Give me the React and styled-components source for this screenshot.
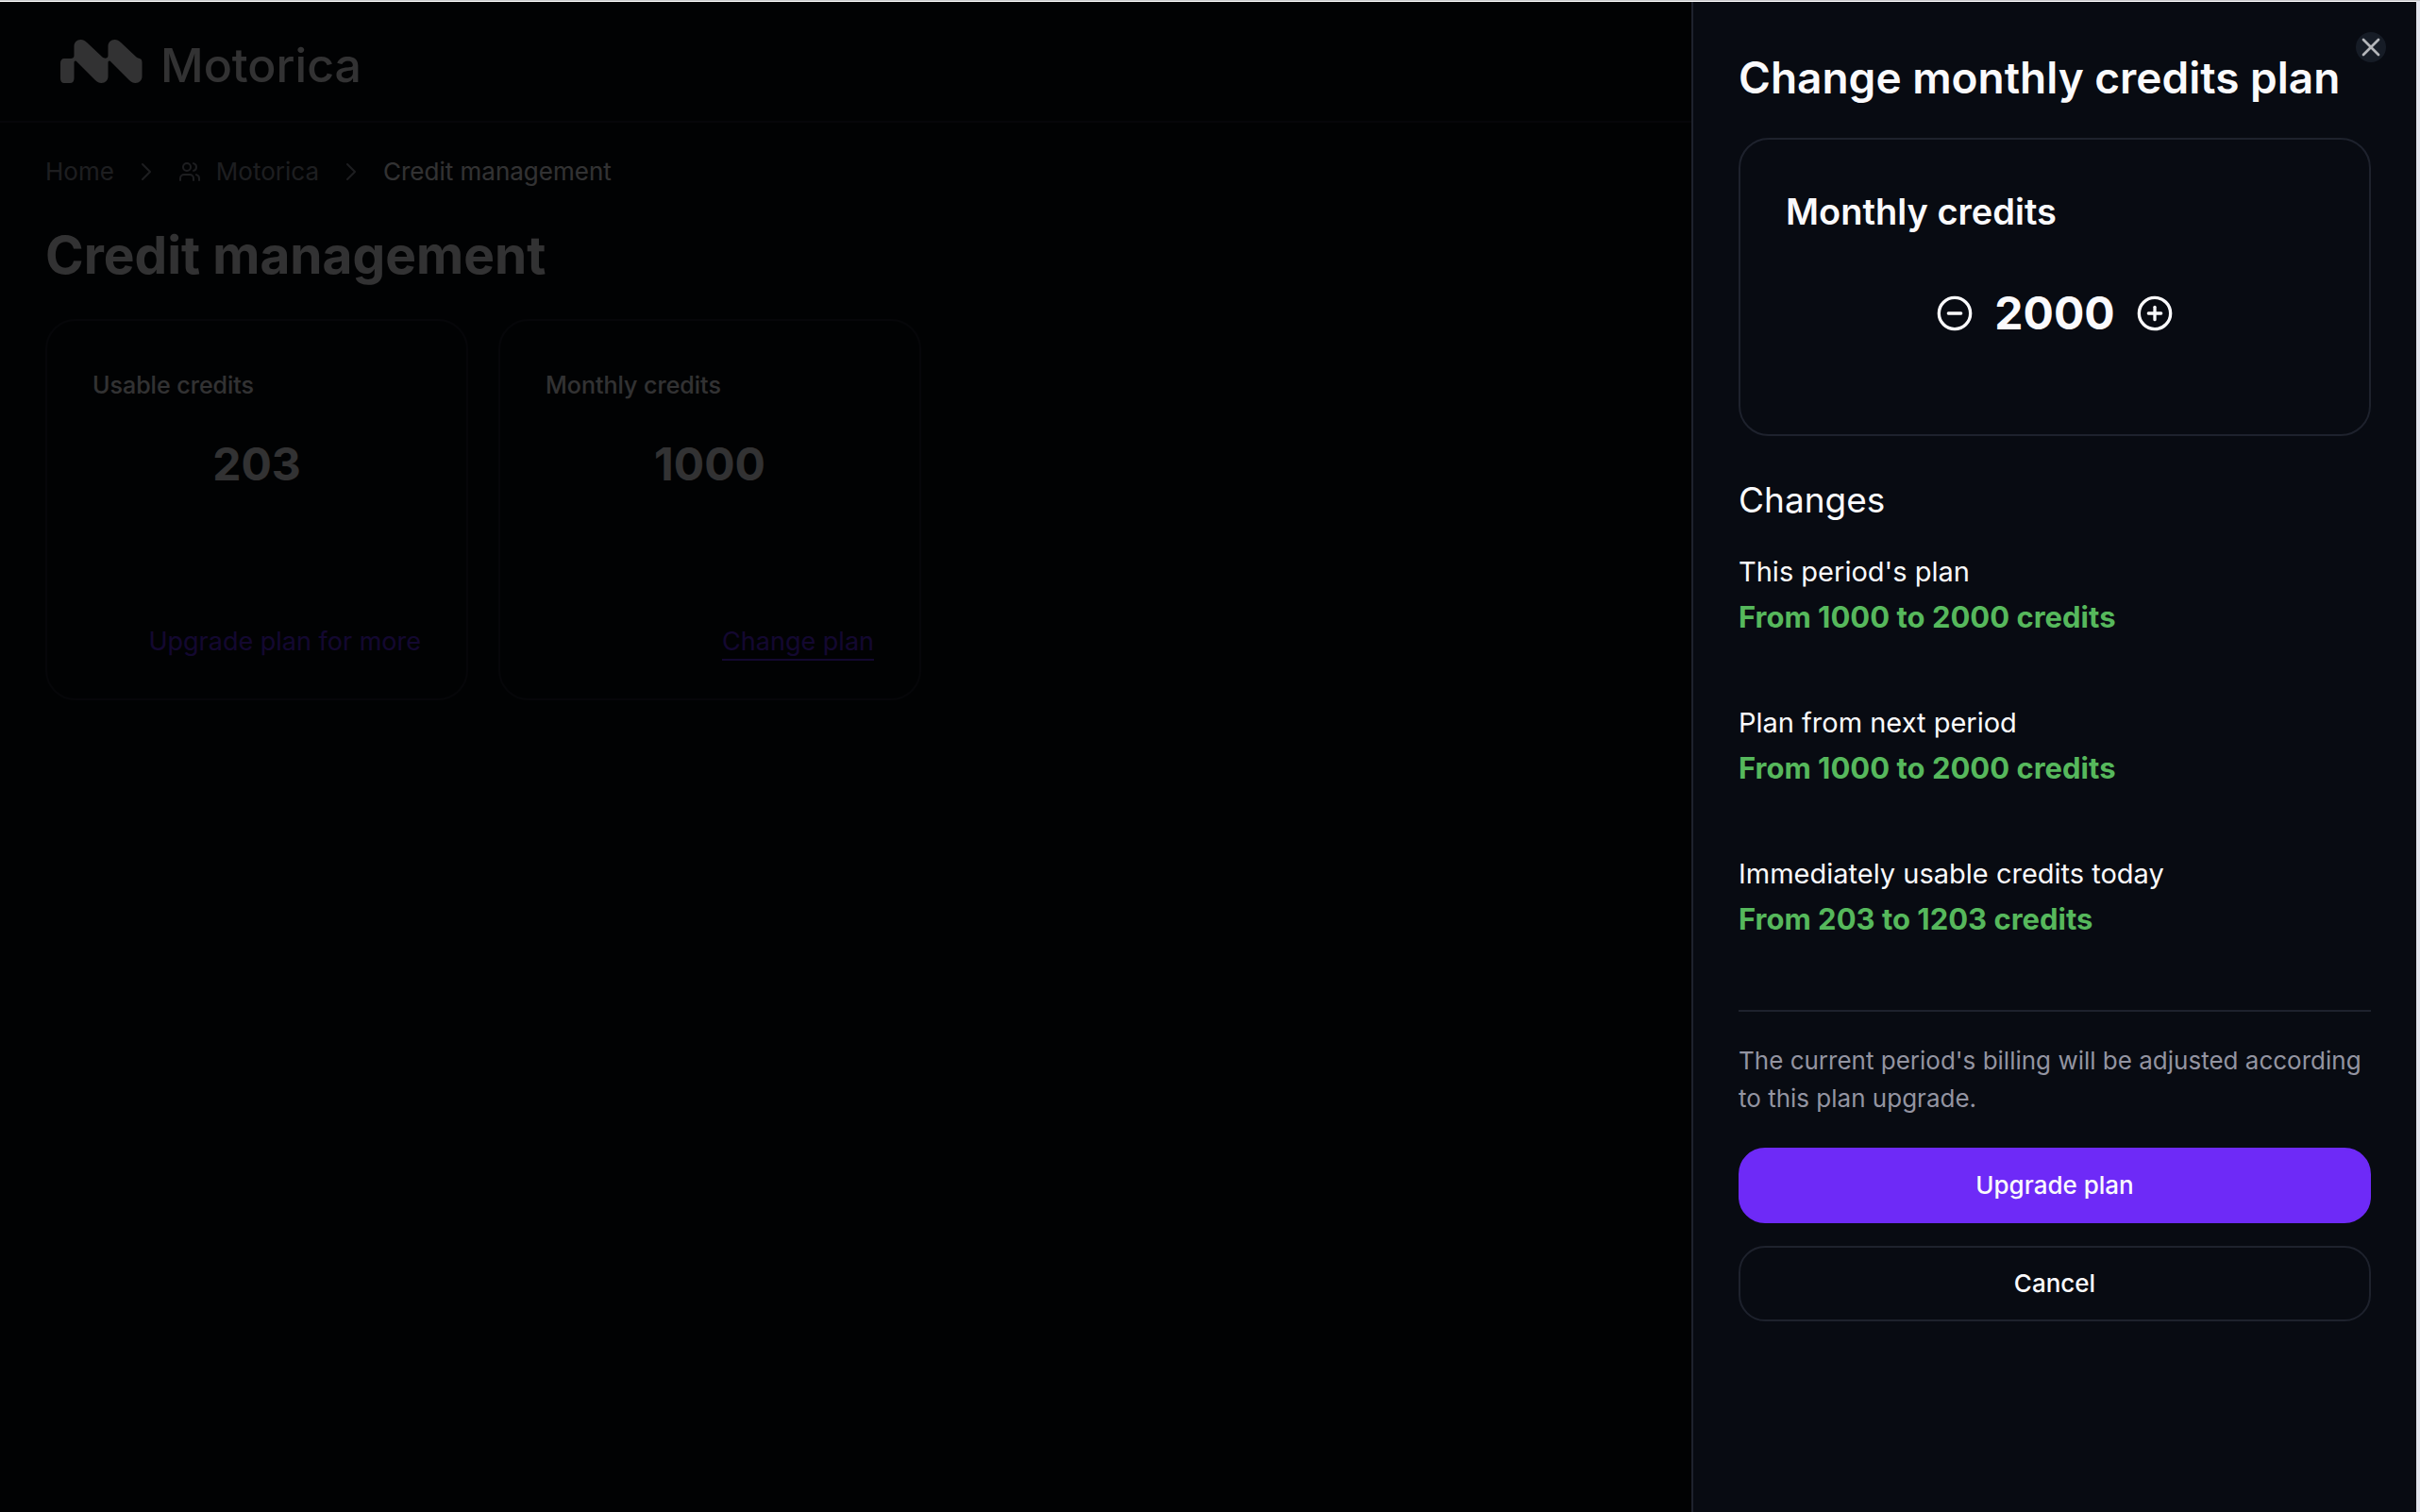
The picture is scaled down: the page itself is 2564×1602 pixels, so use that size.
import React, { useState } from 'react';
import styled, { createGlobalStyle } from 'styled-components';
import { ChevronRight, CircleMinus, CirclePlus, Users, X } from 'lucide-react';

const color = {
  page: '#080b12',
  line: '#1e222d',
  text: '#fafafc',
  muted: '#9394a1',
  purple: '#6e2af7',
  link: '#6228f0',
  green: '#56b85c',
};

const GlobalStyle = createGlobalStyle`
  *, *::before, *::after { box-sizing: border-box; }
  body {
    margin: 0;
    background: #e3e5ed;
    color: ${color.text};
    font-family: Inter, "Liberation Sans", sans-serif;
    font-size: 26px;
    line-height: 40px;
  }
  h1, h2, h3, p, ol, dl, dd { margin: 0; padding: 0; }
  button { font: inherit; color: inherit; cursor: pointer; }
`;

const Frame = styled.div`
  min-height: 100vh;
  display: flex;
  border-top: 1px solid #c6c7ca;
  padding-right: 4px;
`;

const Screen = styled.div`
  position: relative;
  flex: 1;
  border-top: 1px solid #ffffff;
  background: ${color.page};
`;

const Header = styled.header`
  display: flex;
  align-items: center;
  height: 128px;
  padding: 0 64px;
  border-bottom: 2px solid ${color.line};
`;

const Brand = styled.a`
  display: flex;
  align-items: flex-end;
  gap: 16px;
  color: inherit;
  text-decoration: none;
  font-size: 50px;
  font-weight: 500;
  line-height: 38px;
  svg { display: block; }
`;

const Main = styled.main`
  display: flex;
  flex-direction: column;
  gap: 32px;
  padding: 32px 48px;
`;

const Crumbs = styled.ol`
  display: flex;
  align-items: center;
  gap: 18px;
  list-style: none;
  color: ${color.muted};
`;

const Crumb = styled.li`
  display: flex;
  align-items: center;
  color: ${(p) => (p.$current ? color.text : 'inherit')};
`;

const CrumbLink = styled.a`
  display: flex;
  align-items: center;
  gap: 16px;
  color: inherit;
  text-decoration: none;
`;

const PageTitle = styled.h1`
  font-size: 55px;
  font-weight: 700;
  line-height: 72px;
`;

const Cards = styled.div`
  display: flex;
  flex-wrap: wrap;
  gap: 32px;
`;

const Card = styled.section`
  display: flex;
  flex-direction: column;
  width: 448px;
  min-height: 404px;
  padding: 48px 48px 40px;
  border: 2px solid ${color.line};
  border-radius: 32px;
`;

const CardLabel = styled.h2`
  font-size: 25px;
  font-weight: 500;
  line-height: 40px;
`;

const Amount = styled.output`
  font-size: 48px;
  font-weight: 700;
  line-height: 64px;
`;

const CardAmount = styled(Amount)`
  margin-top: 32px;
  text-align: center;
`;

const CardLink = styled.a`
  align-self: flex-end;
  margin-top: auto;
  border-bottom: 2px solid ${(p) => (p.$active ? 'currentColor' : 'transparent')};
  color: ${color.link};
  font-size: 27px;
  line-height: 36px;
  text-decoration: none;
  white-space: nowrap;
`;

const Scrim = styled.div`
  position: absolute;
  inset: 0;
  background: rgba(0, 0, 0, 0.8);
`;

const Drawer = styled.aside`
  position: absolute;
  top: 0;
  right: 0;
  bottom: 0;
  width: 768px;
  max-width: 100%;
  overflow-y: auto;
  padding: 48px;
  border-left: 2px solid ${color.line};
  background: ${color.page};
`;

const CloseButton = styled.button`
  position: absolute;
  top: 32px;
  right: 32px;
  display: flex;
  padding: 0;
  border: 0;
  border-radius: 50%;
  background: #161c26;
  color: #b4b6ba;
`;

const DrawerTitle = styled.h2`
  font-size: 46px;
  font-weight: 600;
  line-height: 64px;
`;

const PlanCard = styled.section`
  margin-top: 32px;
  padding: 48px 48px 96px;
  border: 2px solid ${color.line};
  border-radius: 32px;
`;

const PlanLabel = styled.h3`
  font-size: 38px;
  font-weight: 600;
  line-height: 56px;
`;

const Stepper = styled.div`
  display: flex;
  align-items: center;
  justify-content: center;
  gap: 22px;
  margin-top: 48px;
`;

const StepButton = styled.button`
  display: flex;
  padding: 0;
  border: 0;
  border-radius: 50%;
  background: none;
`;

const ChangesTitle = styled.h3`
  margin-top: 40px;
  font-size: 37px;
  font-weight: 400;
  line-height: 56px;
`;

const Changes = styled.dl`
  display: flex;
  flex-direction: column;
  gap: 64px;
  margin-top: 24px;
  padding-bottom: 72px;
  border-bottom: 2px solid ${color.line};
  font-size: 29px;
  line-height: 48px;
`;

const ChangeValue = styled.dd`
  color: ${color.green};
  font-size: 31px;
  font-weight: 700;
`;

const Note = styled.p`
  margin: 32px 0;
  color: ${color.muted};
`;

const Actions = styled.div`
  display: flex;
  flex-direction: column;
  gap: 24px;
`;

const ActionButton = styled.button`
  height: 80px;
  border: 2px solid ${(p) => (p.$primary ? color.purple : color.line)};
  border-radius: 28px;
  background: ${(p) => (p.$primary ? color.purple : 'transparent')};
  font-weight: 500;
`;

function LogoMark() {
  return (
    <svg width="90" height="46" viewBox="0 0 90 46" fill="currentColor" aria-hidden="true">
      <path d="M4 20H11C13 20 14.5 19 14.5 17V7C14.5 3 17.500 0 21.500 0C24 0 26 1 28 3L44.500 18.500C46 20 50.500 20.500 50.500 17V7C50.500 3 53.500 0 57.500 0C60 0 62 1 64 3L80.500 18.500C82.500 20.500 86.500 19 86.500 24V39C86.500 43 83.500 46 79.500 46C77 46 75 45 73 43L54 24C52 22 50.500 22 50.500 25V39C50.500 43 47.500 46 43.500 46C41 46 39 45 37 43L18 24C16 22 14.500 22 14.500 25V41C14.500 44 13 46 10 46H4C1.500 46 0 44 0 41V25C0 22 1.500 20 4 20Z" />
    </svg>
  );
}

const changes = (credits) => [
  ["This period's plan", 1000, credits],
  ['Plan from next period', 1000, credits],
  ['Immediately usable credits today', 203, credits - 797],
];

export default function App() {
  const [credits, setCredits] = useState(2000);
  return (
    <Frame>
      <GlobalStyle />
      <Screen>
        <Header>
          <Brand href="#home">
            <LogoMark />
            Motorica
          </Brand>
        </Header>
        <Main>
          <nav aria-label="Breadcrumb">
            <Crumbs>
              <Crumb><CrumbLink href="#home">Home</CrumbLink></Crumb>
              <ChevronRight size={32} strokeWidth={1.5} aria-hidden="true" />
              <Crumb>
                <CrumbLink href="#motorica">
                  <Users size={24} aria-hidden="true" />
                  Motorica
                </CrumbLink>
              </Crumb>
              <ChevronRight size={32} strokeWidth={1.5} aria-hidden="true" />
              <Crumb $current aria-current="page">Credit management</Crumb>
            </Crumbs>
          </nav>
          <PageTitle>Credit management</PageTitle>
          <Cards>
            <Card>
              <CardLabel>Usable credits</CardLabel>
              <CardAmount>203</CardAmount>
              <CardLink href="#upgrade">Upgrade plan for more</CardLink>
            </Card>
            <Card>
              <CardLabel>Monthly credits</CardLabel>
              <CardAmount>1000</CardAmount>
              <CardLink href="#change" $active>Change plan</CardLink>
            </Card>
          </Cards>
        </Main>
        <Scrim />
        <Drawer role="dialog" aria-labelledby="drawer-title">
          <CloseButton type="button" aria-label="Close"><X size={32} /></CloseButton>
          <DrawerTitle id="drawer-title">Change monthly credits plan</DrawerTitle>
          <PlanCard>
            <PlanLabel>Monthly credits</PlanLabel>
            <Stepper>
              <StepButton type="button" aria-label="Fewer credits" onClick={() => setCredits(credits - 1000)}>
                <CircleMinus size={40} />
              </StepButton>
              <Amount>{credits}</Amount>
              <StepButton type="button" aria-label="More credits" onClick={() => setCredits(credits + 1000)}>
                <CirclePlus size={40} />
              </StepButton>
            </Stepper>
          </PlanCard>
          <ChangesTitle>Changes</ChangesTitle>
          <Changes>
            {changes(credits).map(([label, from, to]) => (
              <div key={label}>
                <dt>{label}</dt>
                <ChangeValue>{`From ${from} to ${to} credits`}</ChangeValue>
              </div>
            ))}
          </Changes>
          <Note>The current period's billing will be adjusted according to this plan upgrade.</Note>
          <Actions>
            <ActionButton type="button" $primary>Upgrade plan</ActionButton>
            <ActionButton type="button">Cancel</ActionButton>
          </Actions>
        </Drawer>
      </Screen>
    </Frame>
  );
}
